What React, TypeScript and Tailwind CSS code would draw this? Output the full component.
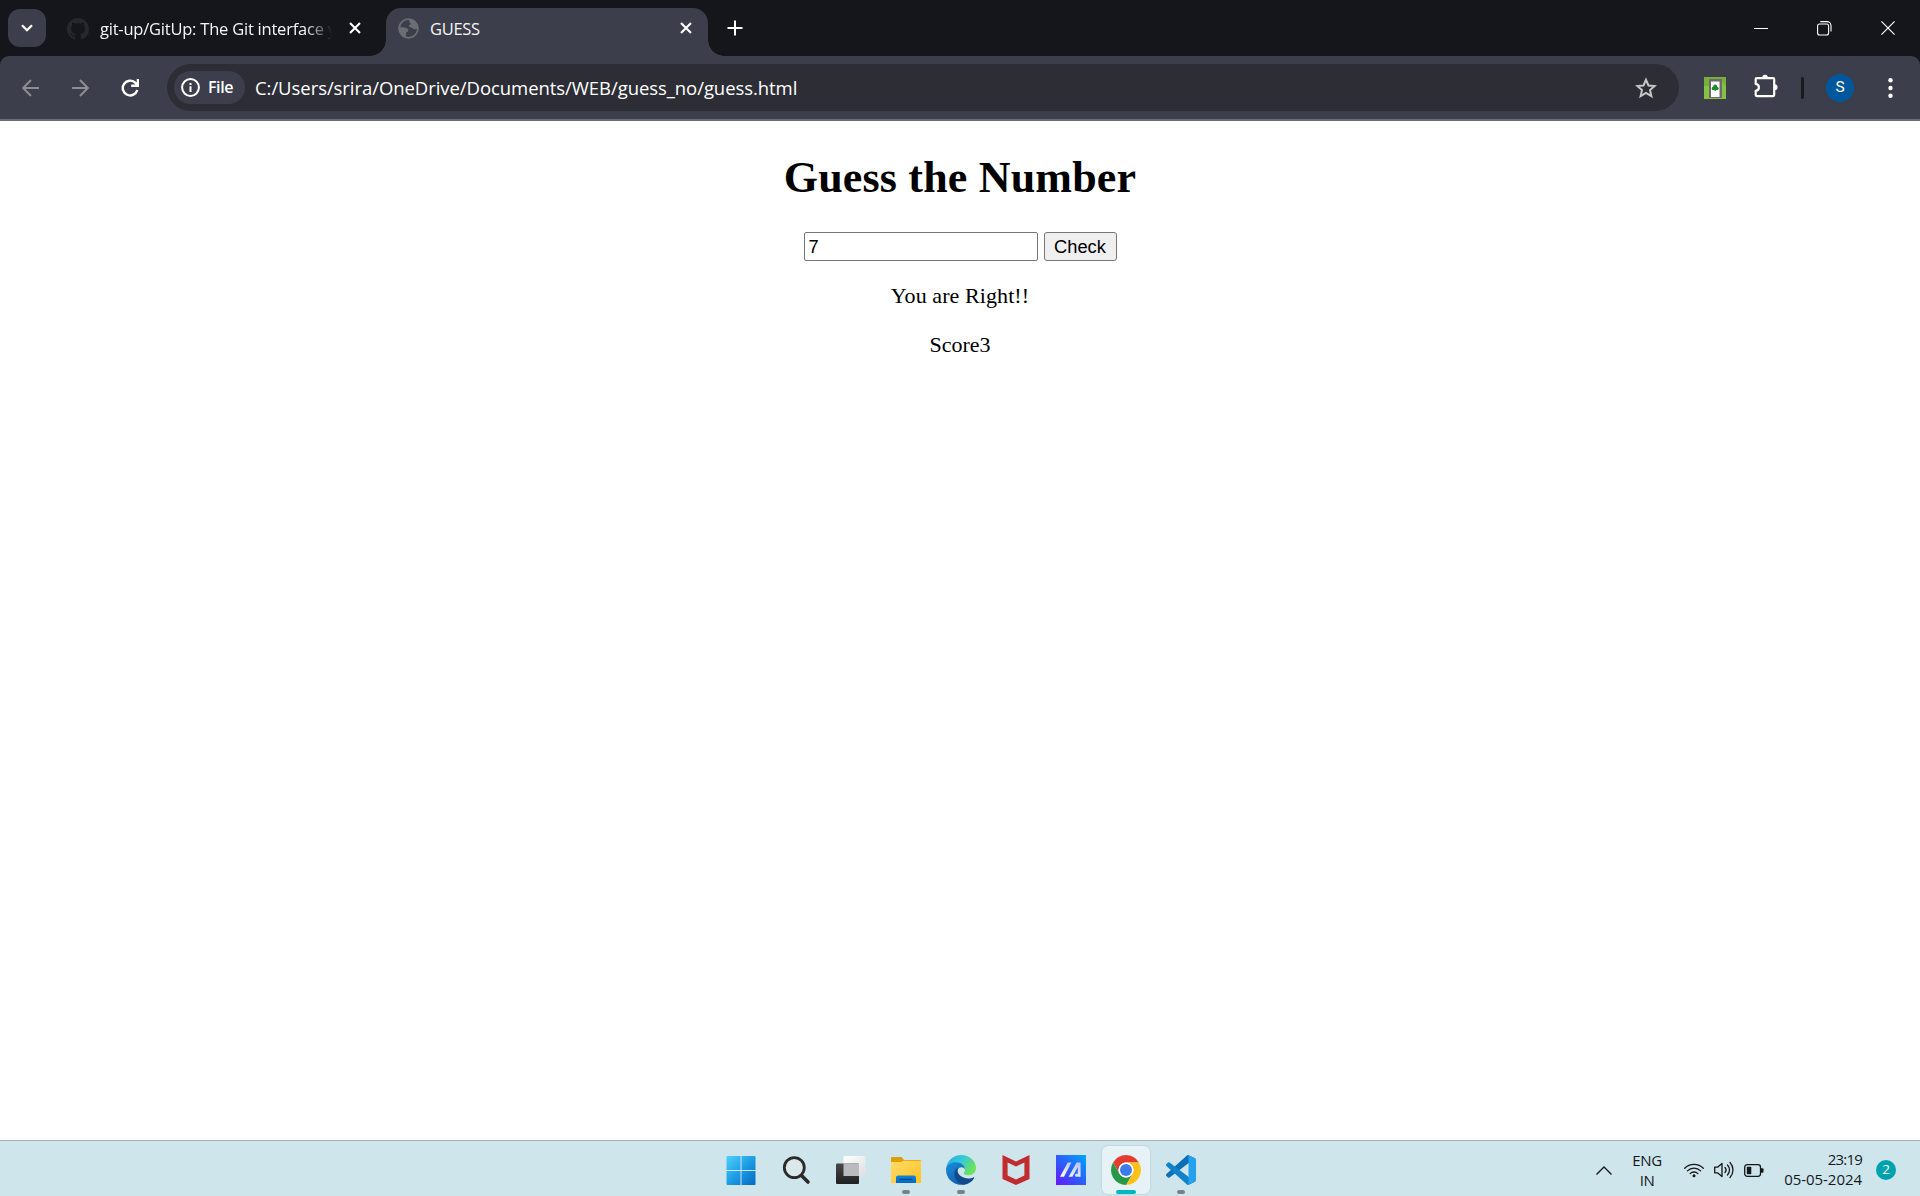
import type { ReactNode } from "react";

const UI_FONT = "font-['Open_Sans','Noto_Sans',sans-serif]";

function CloseGlyph() {
  return (
    <svg className="block h-[12px] w-[12px]" viewBox="0 0 12 12" fill="none" stroke="#fff" strokeWidth="2.1">
      <path d="M1 1l10 10M11 1L1 11" />
    </svg>
  );
}

function GithubMark() {
  return (
    <svg className="block h-[22px] w-[22px]" viewBox="0 0 16 16" fill="#24292e">
      <path d="M8 0C3.58 0 0 3.58 0 8c0 3.54 2.29 6.53 5.47 7.59.4.07.55-.17.55-.38 0-.19-.01-.82-.01-1.49-2.01.37-2.53-.49-2.69-.94-.09-.23-.48-.94-.82-1.13-.28-.15-.68-.52-.01-.53.63-.01 1.08.58 1.23.82.72 1.21 1.87.87 2.33.66.07-.52.28-.87.51-1.07-1.78-.2-3.64-.89-3.64-3.95 0-.87.31-1.59.82-2.15-.08-.2-.36-1.02.08-2.12 0 0 .67-.21 2.2.82.64-.18 1.32-.27 2-.27s1.36.09 2 .27c1.53-1.04 2.2-.82 2.2-.82.44 1.1.16 1.92.08 2.12.51.56.82 1.27.82 2.15 0 3.07-1.87 3.75-3.65 3.95.29.25.54.73.54 1.48 0 1.07-.01 1.93-.01 2.2 0 .21.15.46.55.38A8.01 8.01 0 0 0 16 8c0-4.42-3.58-8-8-8z" />
    </svg>
  );
}

function GlobeIcon() {
  return (
    <svg className="block h-[21px] w-[21px]" viewBox="0 0 21 21">
      <circle cx="10.5" cy="10.5" r="9.4" fill="none" stroke="#6b6e73" strokeWidth="1.8" />
      <path
        fill="#6b6e73"
        d="M11.5 1.2c-.3 1.6-.5 2.8.6 3.6 1 .6.6 1.9-.4 2.2-1.2.3-1.2 1.300-.2 1.900 1 .6 2.600.4 3.400 1.500.6.9 1.600 1.200 4.600.4.3-4.600-3-9.200-8-9.600zM1.200 9.500c2.300-.4 5-.3 7 .4 1.600.6 2.600 1.700 2.200 2.900-.3.900-1.600.9-2.200 1.600-.7.8.2 1.800-.3 2.700-.3.700-.6 1.500-.4 2.500C3.500 18.400.8 13.900 1.200 9.500z"
      />
    </svg>
  );
}

function TabStrip() {
  return (
    <div className={`flex h-14 items-start bg-[#15161b] text-[#f4f4f6] ${UI_FONT}`}>
      <div className="ml-2 mt-[9px] flex h-[38px] w-[38px] items-center justify-center rounded-xl bg-[#3d3e4b]">
        <svg className="block h-3 w-3" viewBox="0 0 12 12" fill="none" stroke="#fff" strokeWidth="2.3">
          <path d="M1 3.200l5 5 5-5" />
        </svg>
      </div>
      <div className="ml-[21px] mt-[17px] flex w-[295px] items-center">
        <GithubMark />
        <div className="ml-[11px] w-[234px] overflow-hidden whitespace-nowrap text-[16.5px] leading-6 tracking-[-0.22px] [mask-image:linear-gradient(to_right,#000_205px,transparent_232px)]">
          git-up/GitUp: The Git interface you
        </div>
        <div className="-mt-[2px] ml-[15px]">
          <CloseGlyph />
        </div>
      </div>
      <div className="flex h-14 items-end">
        <div className="ml-[8px] h-4 w-4 shrink-0 bg-[radial-gradient(circle_at_0_0,#15161b_15.500px,#3d3e4b_16px)]" />
        <div className="flex h-12 w-[322px] items-start rounded-t-[15px] bg-[#3d3e4b] pl-3 pt-[8px]">
          <div className="mt-[2px]">
            <GlobeIcon />
          </div>
          <span className="ml-[11px] mt-px w-[249px] text-[16.500px] leading-6 tracking-[-0.3px]">GUESS</span>
          <div className="ml-px mt-[6px]">
            <CloseGlyph />
          </div>
        </div>
        <div className="h-4 w-4 shrink-0 bg-[radial-gradient(circle_at_100%_0,#15161b_15.500px,#3d3e4b_16px)]" />
      </div>
      <svg className="ml-[3px] mt-5 block h-[16px] w-[16px]" viewBox="0 0 16 16" fill="none" stroke="#fff" strokeWidth="2">
        <path d="M8 .5v15M.5 8h15" />
      </svg>
      <div className="ml-auto mr-[25px] mt-[20px] flex items-center">
        <svg className="mr-[49px] block h-4 w-[14px]" viewBox="0 0 14 16">
          <path d="M0 8.500h14" stroke="#fff" strokeWidth="1" />
        </svg>
        <svg className="mr-[49px] block h-4 w-[15px]" viewBox="0 0 15 16" fill="none" stroke="#fff" strokeWidth="1.100">
          <rect x=".6" y="4" width="11" height="11" rx="2" />
          <path d="M3.300 1.600h6.700a4 4 0 0 1 4 4v5.900" />
        </svg>
        <svg className="block h-4 w-[14px]" viewBox="0 0 14 16" stroke="#fff" strokeWidth="1.200">
          <path d="M.4 1.400l13.200 13.200M13.600 1.400L.4 14.600" />
        </svg>
      </div>
    </div>
  );
}

function Toolbar() {
  return (
    <div className={`bg-[#15161b] text-white ${UI_FONT}`}>
      <div className="flex h-[65px] items-center rounded-t-[9px] border-b-2 border-[#6a6b78] bg-[#3d3e4b]">
        <svg className="ml-[22px] block h-[18px] w-[18px]" viewBox="0 0 18 18" fill="none" stroke="#8c8d95" strokeWidth="2">
          <path d="M17 9H1.500M9 1L1.200 9 9 17" />
        </svg>
        <svg className="ml-[31px] block h-[18px] w-[18px]" viewBox="0 0 18 18" fill="none" stroke="#8c8d95" strokeWidth="2">
          <path d="M1 9h15.500M9 1l7.800 8L9 17" />
        </svg>
        <svg className="ml-[32px] block h-[18px] w-[18px]" viewBox="0 0 18 18" fill="none" stroke="#fff" strokeWidth="2.400">
          <path d="M16.300 11A7.400 7.400 0 1 1 14 3.400L16 5.600" />
          <path d="M16.900 0v6.700H10.200" />
        </svg>
        <div className="ml-[28px] flex h-[47px] w-[1512px] items-center rounded-full bg-[#2c2d35] pl-[7px] pr-[22px]">
          <div className="flex h-[33px] w-[71px] items-center rounded-full bg-[#3d3e4b] pl-[7px]">
            <svg className="block h-[19px] w-[19px]" viewBox="0 0 19 19">
              <circle cx="9.500" cy="9.500" r="8.400" fill="none" stroke="#fff" strokeWidth="2" />
              <path d="M9.500 8.300v5.700M9.500 4.900v2" stroke="#fff" strokeWidth="2" />
            </svg>
            <span className="-mt-px ml-[8px] text-[16px] font-semibold leading-6 tracking-[-0.4px]">File</span>
          </div>
          <span className="ml-[10px] mt-px whitespace-nowrap text-[18.500px] leading-6 tracking-[-0.06px]">
            C:/Users/srira/OneDrive/Documents/WEB/guess_no/guess.html
          </span>
          <svg className="ml-auto block h-[22px] w-[22px]" viewBox="0 0 22 22" fill="none" stroke="#c7c7c7" strokeWidth="2">
            <path d="M11 2.800l2.500 5.700 6.100.5-4.600 4.100 1.400 6.100L11 16l-5.400 3.200L7 13.100 2.400 9l6.100-.5z" />
          </svg>
        </div>
        <svg className="ml-[25px] block h-[22px] w-[22px]" viewBox="0 0 22 22">
          <path fill="#84c341" d="M0 0h22v22H0z" />
          <path fill="#6ba032" d="M0 0h22v9l-6-7H6v7H0z" opacity=".55" />
          <path fill="#6e6a6b" d="M5 2h13v19H5z" />
          <path fill="#fff" d="M7 4.500h8.500V20H7z" />
          <g fill="#1c8a24">
            <circle cx="11.200" cy="9.400" r="1.900" />
            <circle cx="9.400" cy="11.500" r="1.700" />
            <circle cx="13" cy="11.500" r="1.700" />
            <path d="M10.500 11h1.400v3h-1.400z" />
          </g>
        </svg>
        <svg className="-mt-[3px] ml-[28px] block h-[24px] w-[24px]" viewBox="0 0 24 24" fill="none" stroke="#fff" strokeWidth="2.200" strokeLinejoin="round">
          <path d="M2.700 4.200h16.500q1 0 1 1v15.900q0 1-1 1H2.700q-1 0-1-1v-4.200q3.200-.6 3.200-3.500t-3.200-3.500V5.200q0-1 1-1z" />
          <path fill="#fff" stroke="none" d="M8.300 4a2.800 3.300 0 0 1 5.600 0zM20.600 10.300a3 2.900 0 0 1 0 5.800z" />
        </svg>
        <div className="ml-[23px] h-[22px] w-[3px] rounded-full bg-[#191a20]" />
        <div className="ml-[22px] flex h-7 w-7 items-center justify-center rounded-full bg-[#00579b] pt-px font-[Roboto,sans-serif] text-[15.500px]">
          S
        </div>
        <svg className="ml-[34px] block h-[20px] w-[5px]" viewBox="0 0 5 20" fill="#fff">
          <circle cx="2.500" cy="2.300" r="2.200" />
          <circle cx="2.500" cy="10" r="2.200" />
          <circle cx="2.500" cy="17.700" r="2.200" />
        </svg>
      </div>
    </div>
  );
}

function Page() {
  return (
    <main className="flex flex-1 flex-col items-center bg-white font-['Liberation_Serif',serif] text-[22px] text-black">
      <h1 className="mt-[32px] text-[44px] font-bold leading-[50px] tracking-[0.18px]">Guess the Number</h1>
      <div className="mt-[29px] flex gap-[6px] font-['Liberation_Sans',sans-serif] text-[18.300px]">
        <input
          className="h-[29px] w-[234px] rounded-[2px] border border-[#767676] bg-white px-[4px] leading-6 outline-none"
          defaultValue="7"
        />
        <button className="h-[29px] w-[73px] rounded-[3px] border border-[#767676] bg-[#efefef] text-center leading-[26px]">Check</button>
      </div>
      <p className="mt-[22px] leading-[26px] tracking-[0.08px]">You are Right!!</p>
      <p className="mt-[23px] leading-[26px]">Score3</p>
    </main>
  );
}

function Slot({ children, dot, active }: { children: ReactNode; dot?: boolean; active?: boolean }) {
  return (
    <div className="flex w-[55px] justify-center">
      <div
        className={`flex h-12 w-12 flex-col items-center rounded-md pt-[9px] ${
          active ? "bg-[#e7f2f7] shadow-[0_0_1px_1px_#c4d8df]" : ""
        }`}
      >
        {children}
        <div
          className={`mt-[5px] h-[4px] shrink-0 rounded-full ${
            active ? "w-[20px] bg-[#00b7c3]" : dot ? "w-[8px] bg-[#768388]" : "w-0"
          }`}
        />
      </div>
    </div>
  );
}

const ICON = "block h-[30px] w-[30px] shrink-0";

function Taskbar() {
  return (
    <footer className={`flex h-14 items-start border-t border-[#a3b1b8] bg-[#cfe5ec] pt-[5px] text-[#16191b] ${UI_FONT}`}>
      <div className="w-[713px] shrink-0" />
      <Slot>
        <svg className={ICON} viewBox="0 0 30 30">
          <defs>
            <linearGradient id="win" x1="0" y1="0" x2="1" y2="1">
              <stop offset="0" stopColor="#4fd0fb" />
              <stop offset=".55" stopColor="#1a98e2" />
              <stop offset="1" stopColor="#0568c4" />
            </linearGradient>
          </defs>
          <path fill="url(#win)" d="M1.500 1h13v14h-14V2q0-1 1-1zM15.500 1h13q1 0 1 1v13h-14zM.5 16h14v14h-13q-1 0-1-1zM15.500 16h14v13q0 1-1 1h-13z" />
        </svg>
      </Slot>
      <Slot>
        <svg className={ICON} viewBox="0 0 30 30">
          <circle cx="13.300" cy="12.600" r="10" fill="#dfe9ec" fillOpacity=".7" stroke="#2b2a29" strokeWidth="2.800" />
          <path d="M20.500 20.500l6.500 6.500" stroke="#2b2a29" strokeWidth="3.600" strokeLinecap="round" />
        </svg>
      </Slot>
      <Slot>
        <svg className={ICON} viewBox="0 0 30 30">
          <defs>
            <linearGradient id="tvDark" x1="0" y1="0" x2="0" y2="1">
              <stop offset="0" stopColor="#484848" />
              <stop offset="1" stopColor="#202020" />
            </linearGradient>
            <linearGradient id="tvLight" x1="0" y1="0" x2="1" y2="1">
              <stop offset="0" stopColor="#fff" />
              <stop offset="1" stopColor="#dcdfe0" />
            </linearGradient>
          </defs>
          <rect x="7.500" y="1" width="22" height="20" rx="1.200" fill="url(#tvLight)" />
          <rect x="0" y="8.500" width="23" height="20.500" rx="1" fill="url(#tvDark)" />
          <rect x="7.500" y="8.500" width="15.500" height="12.500" fill="#b9bbbc" />
        </svg>
      </Slot>
      <Slot dot>
        <svg className={ICON} viewBox="0 0 30 30">
          <defs>
            <linearGradient id="fold" x1="0" y1="0" x2="1" y2="1">
              <stop offset="0" stopColor="#ffdc6b" />
              <stop offset="1" stopColor="#ffc11f" />
            </linearGradient>
            <linearGradient id="foldBlue" x1="0" y1="0" x2="0" y2="1">
              <stop offset="0" stopColor="#0f86d8" />
              <stop offset="1" stopColor="#0a66be" />
            </linearGradient>
          </defs>
          <path fill="#dd9f04" d="M0 3q0-1 1-1h9.500l2.500 3h16q1 0 1 1v6H0z" />
          <path fill="url(#fold)" d="M0 8q0-1 1-1h9l2.500-1.300H30V28H0z" />
          <path fill="url(#foldBlue)" d="M5 28v-5.500q0-2 2-2h16q2 0 2 2V28z" />
          <path stroke="#07478a" strokeWidth="1.200" strokeLinecap="round" d="M9 24.300h12" />
        </svg>
      </Slot>
      <Slot dot>
        <svg className={ICON} viewBox="0 0 30 30">
          <defs>
            <linearGradient id="edgeTop" x1="0" y1="0" x2="1" y2=".5">
              <stop offset="0" stopColor="#27a8dd" />
              <stop offset=".5" stopColor="#35c8dc" />
              <stop offset="1" stopColor="#6be35b" />
            </linearGradient>
            <linearGradient id="edgeLeft" x1="0" y1="0" x2=".6" y2="1">
              <stop offset="0" stopColor="#1a8fdc" />
              <stop offset="1" stopColor="#0f5fae" />
            </linearGradient>
          </defs>
          <path fill="url(#edgeTop)" d="M.2 13C1.200 5.500 7.500 0 15 0c8.700 0 15 6 15 13 0 4.500-3.300 7.200-7.500 7.200-3.500 0-5-1.300-4.800-2.200.2-.8 1.300-1.300 1.300-3.300C19 11 14.500 8 9.500 8 5 8 1.800 10.200.2 13z" />
          <path fill="url(#edgeLeft)" d="M.1 13.200C1.400 9.500 5 7.200 9.500 7.200c5.700 0 9.500 3.300 9.500 7.300-.8-1.600-2-2.300-3.500-2.300-2.800 0-5.300 3-5.300 6.500 0 6 6 10.300 9 10.500A15 15 0 0 1 .1 13.200z" />
          <path fill="#114a8b" d="M12.500 12.600C8.500 14.600 8 18 8.700 21c1.300 5.500 5.800 8.600 9.500 8.700 4.300-.8 7.800-3 9.900-6.500.4-.7-.2-1.200-.9-.8-1.300.6-3 1-4.700 1-6 0-10.300-3.500-10.800-6.900-.2-1.500.1-2.900.8-3.900z" />
        </svg>
      </Slot>
      <Slot>
        <svg className={ICON} viewBox="0 0 30 30">
          <path
            fill="#c12c2e"
            fillRule="evenodd"
            d="M1.500 0L15 6.500 28.500 0v24L15 30 1.500 24zM6.600 7.500v13L15 24.500l8.400-4v-13L15 11.500z"
          />
        </svg>
      </Slot>
      <Slot>
        <svg className={ICON} viewBox="0 0 30 30">
          <defs>
            <linearGradient id="asus" x1="0" y1="1" x2="1" y2="0">
              <stop offset="0" stopColor="#6a15ff" />
              <stop offset=".5" stopColor="#2a60fb" />
              <stop offset="1" stopColor="#02a5fb" />
            </linearGradient>
            <linearGradient id="asusBar" x1="0" y1="1" x2=".6" y2="0">
              <stop offset="0" stopColor="#fff" />
              <stop offset="1" stopColor="#c3c9fa" />
            </linearGradient>
          </defs>
          <path fill="url(#asus)" d="M0 0h30v30H0z" />
          <path fill="url(#asusBar)" d="M11.800 7.500h3.600L8 21.800H4zM20.600 7.500h4v14.300h-2.800V12l-5.400 9.800h-3.700z" />
          <circle cx="20.600" cy="20.200" r="1.600" fill="#dfe3ff" />
        </svg>
      </Slot>
      <Slot dot active>
        <svg className={ICON} viewBox="0 0 48 48">
          <circle cx="24" cy="24" r="23.500" fill="#fff" />
          <path fill="#e33b2e" d="M3.220 12A24 24 0 0 1 44.780 12H24a12 12 0 0 0-10.390 18z" />
          <path fill="#fcc21b" d="M44.780 12A24 24 0 0 1 24 48l10.390-18A12 12 0 0 0 24 12z" />
          <path fill="#279847" d="M24 48A24 24 0 0 1 3.220 12l10.390 18a12 12 0 0 0 20.780 0z" />
          <circle cx="24" cy="24" r="12" fill="#fff" />
          <circle cx="24" cy="24" r="9.600" fill="#3a7cec" />
        </svg>
      </Slot>
      <Slot dot>
        <svg className={ICON} viewBox="0 0 100 100">
          <path fill="#0b70b5" d="M96.500 10.800L75.900.9a6.200 6.200 0 0 0-7.100 1.200L1.300 63.600a4.200 4.200 0 0 0 0 6.200l5.500 5a4.200 4.200 0 0 0 5.300.2L93.400 13.400A4.100 4.100 0 0 1 100 16.700v-.3a6.200 6.200 0 0 0-3.500-5.600z" />
          <path fill="#1283cb" d="M96.500 89.200L75.900 99.100a6.200 6.200 0 0 1-7.100-1.200L1.300 36.400a4.200 4.200 0 0 1 0-6.200l5.500-5a4.200 4.200 0 0 1 5.300-.2l81.300 61.600a4.100 4.100 0 0 0 6.600-3.300v.3a6.200 6.200 0 0 1-3.500 5.600z" />
          <path fill="#26a1f0" d="M75.900 99.100a6.200 6.200 0 0 1-7.100-1.200c2.300 2.300 6.200.7 6.200-2.600V4.700c0-3.300-3.900-4.900-6.200-2.600A6.200 6.200 0 0 1 75.900.9l20.600 9.900a6.200 6.200 0 0 1 3.500 5.600v67.200a6.200 6.200 0 0 1-3.500 5.600z" />
        </svg>
      </Slot>

      <div className="ml-auto mr-[24px] flex h-12 items-center">
        <svg className="block h-[9px] w-[16px]" viewBox="0 0 16 9" fill="none" stroke="#16191b" strokeWidth="1.400">
          <path d="M.5 8.500L8 1l7.500 7.500" />
        </svg>
        <div className="ml-[15px] flex w-10 flex-col items-center text-[15px] leading-5 tracking-[-0.4px]">
          <span>ENG</span>
          <span>IN</span>
        </div>
        <svg className="ml-[17px] block h-[16px] w-[20px]" viewBox="0 0 20 16" fill="none" stroke="#16191b" strokeWidth="1.300" strokeLinecap="round">
          <path d="M.7 6.200a13.100 13.100 0 0 1 18.600 0M3.400 8.900a9.300 9.300 0 0 1 13.200 0M6.100 11.600a5.500 5.500 0 0 1 7.800 0" />
          <circle cx="10" cy="13.700" r="1.500" fill="#16191b" stroke="none" />
        </svg>
        <svg className="ml-[10px] block h-[18px] w-[20px]" viewBox="0 0 20 18" fill="none" stroke="#16191b" strokeWidth="1.300" strokeLinecap="round" strokeLinejoin="round">
          <path d="M.7 6.200v5.600h2.800L8 15.600V2.400L3.500 6.200zM11 6.400a4 4 0 0 1 0 5.200M13.500 4a7.300 7.300 0 0 1 0 10M16 1.500a11 11 0 0 1 0 15" />
        </svg>
        <svg className="ml-[10px] block h-[13px] w-[20px]" viewBox="0 0 20 13" fill="none" stroke="#16191b" strokeWidth="1.300">
          <rect x=".7" y=".7" width="15.800" height="11.600" rx="2.500" />
          <rect x="2.800" y="2.800" width="4.500" height="7.400" rx=".8" fill="#16191b" stroke="none" />
          <path d="M17 4.200h1.500q1 0 1 1v2.600q0 1-1 1H17z" fill="#16191b" stroke="none" />
        </svg>
        <div className="-mt-[2px] ml-[20px] flex w-[78px] flex-col items-end whitespace-nowrap text-[15px] leading-5">
          <span className="tracking-[-0.8px]">23:19</span>
          <span className="tracking-[-0.04px]">05-05-2024</span>
        </div>
        <div className="ml-[14px] flex h-5 w-5 items-center justify-center rounded-full bg-[#00a3ad] text-[13.500px] leading-none text-white">
          2
        </div>
      </div>
    </footer>
  );
}

export default function App() {
  return (
    <div className="flex h-[1196px] w-[1920px] flex-col overflow-hidden">
      <TabStrip />
      <Toolbar />
      <Page />
      <Taskbar />
    </div>
  );
}
